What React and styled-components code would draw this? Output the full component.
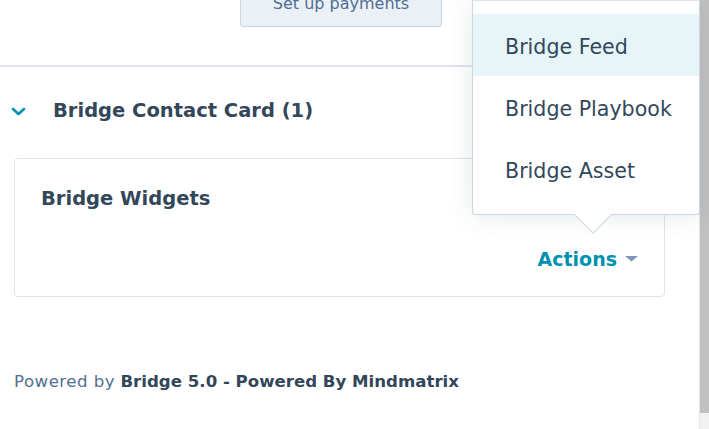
import React from 'react'
import styled, { createGlobalStyle } from 'styled-components'

const GlobalStyle = createGlobalStyle`
  html, body {
    margin: 0;
    padding: 0;
    background: #fff;
    overflow: hidden;
  }
  body {
    font-family: "DejaVu Sans", "Liberation Sans", sans-serif;
    color: #33475b;
  }
`

const Page = styled.div`
  display: flex;
  width: 709px;
  height: 429px;
`

const Main = styled.div`
  position: relative;
  flex: 1;
  display: flex;
  flex-direction: column;
`

const ScrollTrack = styled.div`
  width: 9px;
  display: flex;
  flex-direction: column;
  background: #f1f1f1;
  border-left: 1px solid #e6e6e6;
`

const ScrollThumb = styled.div`
  height: 413px;
  background: #c1c1c1;
`

const TopBar = styled.div`
  height: 65px;
  display: flex;
  align-items: flex-start;
  padding-left: 240px;
  border-bottom: 2px solid #dfe3eb;
`

const PayButton = styled.button`
  margin-top: -20px;
  height: 47px;
  width: 202px;
  background: #eaf0f6;
  border: 1px solid #cbd6e2;
  border-radius: 3px;
  color: #506e91;
  font-family: inherit;
  font-size: 16px;
  padding: 0;
`

const SectionHeader = styled.div`
  display: flex;
  align-items: center;
  height: 26px;
  margin-top: 31px;
  padding-left: 11px;
  gap: 27px;
`

const SectionTitle = styled.h2`
  margin: 0;
  font-size: 19.5px;
  font-weight: 700;
  line-height: 26px;
  color: #33475b;
`

const Card = styled.div`
  margin: 34px 34px 0 14px;
  height: 137px;
  border: 1px solid #dfe3eb;
  border-radius: 4px;
  padding: 0 26px 0 26px;
  display: flex;
  flex-direction: column;
`

const CardTitle = styled.h3`
  margin: 27px 0 0;
  font-size: 19.5px;
  font-weight: 700;
  color: #33475b;
  line-height: 26px;
`

const ActionsButton = styled.button`
  align-self: flex-end;
  margin-top: 34px;
  display: flex;
  align-items: center;
  gap: 8px;
  background: none;
  border: none;
  padding: 0;
  font-family: inherit;
  font-size: 19px;
  font-weight: 700;
  color: #0091ae;
  line-height: 26px;
`

const Footer = styled.p`
  margin: 74px 0 0 14px;
  font-size: 16.6px;
  color: #516f90;
  line-height: 22px;
  span {
    letter-spacing: 0.5px;
  }
  strong {
    color: #33475b;
    font-weight: 700;
  }
`

const Dropdown = styled.ul`
  position: absolute;
  left: 472px;
  top: 0;
  width: 226px;
  margin: 0;
  padding: 13px 0 14px;
  list-style: none;
  background: #fff;
  border: 1px solid #cbd6e2;
  border-top: 1px solid #dfe3eb;
  border-radius: 0 0 3px 3px;
  box-shadow: 0 1px 24px rgba(45, 62, 80, 0.12);
  &::after {
    content: '';
    position: absolute;
    left: 106px;
    bottom: -14px;
    width: 27px;
    height: 27px;
    background: #fff;
    border-right: 1px solid #cbd6e2;
    border-bottom: 1px solid #cbd6e2;
    transform: rotate(45deg);
  }
`

const MenuItem = styled.li`
  height: 62px;
  box-sizing: border-box;
  padding-top: 4px;
  display: flex;
  align-items: center;
  padding-left: 32px;
  font-size: 20.6px;
  color: #33475b;
  background: ${p => (p.$active ? '#e5f5f8' : 'transparent')};
`

const Chevron = () => (
  <svg width="15" height="9" viewBox="0 0 15 9">
    <polyline points="2,2 7.5,7 13,2" fill="none" stroke="#0091ae" strokeWidth="2.6" strokeLinecap="round" strokeLinejoin="round" />
  </svg>
)

const Caret = () => (
  <svg width="13" height="6" viewBox="0 0 13 6">
    <polygon points="0,0 13,0 6.5,5.5" fill="#7c98b6" />
  </svg>
)

export default function App() {
  const items = ['Bridge Feed', 'Bridge Playbook', 'Bridge Asset']
  return (
    <Page>
      <GlobalStyle />
      <Main>
        <TopBar>
          <PayButton>Set up payments</PayButton>
        </TopBar>
        <SectionHeader>
          <Chevron />
          <SectionTitle>Bridge Contact Card (1)</SectionTitle>
        </SectionHeader>
        <Card>
          <CardTitle>Bridge Widgets</CardTitle>
          <ActionsButton>
            Actions <Caret />
          </ActionsButton>
        </Card>
        <Footer>
          <span>Powered by</span> <strong>Bridge 5.0 - Powered By Mindmatrix</strong>
        </Footer>
        <Dropdown>
          {items.map((name, i) => (
            <MenuItem key={name} $active={i === 0}>{name}</MenuItem>
          ))}
        </Dropdown>
      </Main>
      <ScrollTrack>
        <ScrollThumb />
      </ScrollTrack>
    </Page>
  )
}
